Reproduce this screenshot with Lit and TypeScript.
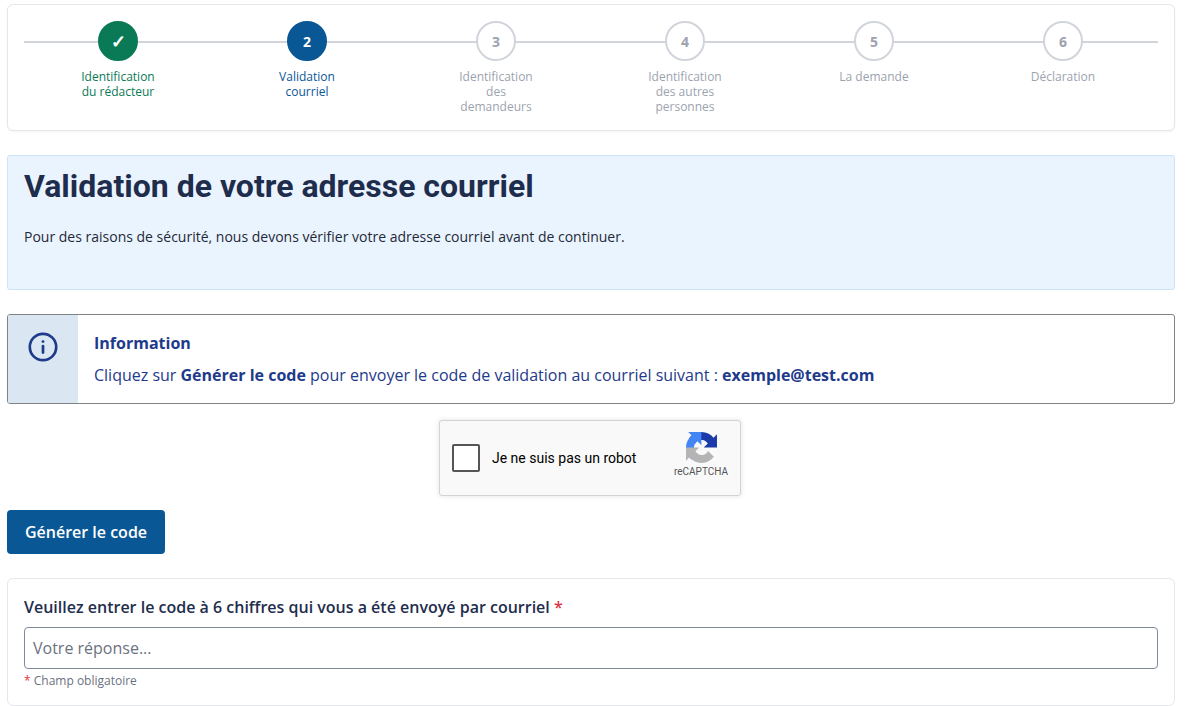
import { LitElement, html, css, svg } from "lit";
import { customElement } from "lit/decorators.js";

const steps = [
  { n: "✓", lines: ["Identification", "du rédacteur"], cls: "done" },
  { n: "2", lines: ["Validation", "courriel"], cls: "active" },
  { n: "3", lines: ["Identification", "des", "demandeurs"], cls: "" },
  { n: "4", lines: ["Identification", "des autres", "personnes"], cls: "" },
  { n: "5", lines: ["La demande"], cls: "" },
  { n: "6", lines: ["Déclaration"], cls: "" },
];

const recaptchaLogo = svg`<svg class="rc-logo" width="31" height="31" viewBox="0 0 64 64" aria-hidden="true">
  <path fill="#1c3aa9" d="M64 31.955l-.033-1.37V4.687l-7.16 7.16C50.948 4.674 42.033.093 32.05.093c-10.4 0-19.622 4.96-25.458 12.64l11.736 11.86a15.55 15.55 0 0 1 4.754-5.334c2.05-1.6 4.952-2.906 8.968-2.906.485 0 .86.057 1.135.163 4.976.393 9.288 3.14 11.828 7.124l-8.307 8.307c10.522-.04 22.4-.067 27.295.004"/>
  <path fill="#4285f4" d="M31.862.002l-1.37.033H4.594l7.16 7.16C4.58 13.054 0 21.97 0 31.953c0 10.4 4.96 19.622 12.64 25.458l11.86-11.736a15.55 15.55 0 0 1-5.334-4.754c-1.6-2.05-2.906-4.952-2.906-8.968 0-.485.057-.86.163-1.135.393-4.976 3.14-9.288 7.124-11.828l8.307 8.307c-.04-10.522-.067-22.4.004-27.295"/>
  <path fill="#b4b4b4" d="M.002 32l.033 1.37v25.898l7.16-7.16c5.86 7.173 14.775 11.754 24.76 11.754 10.4 0 19.622-4.96 25.458-12.64l-11.736-11.86a15.55 15.55 0 0 1-4.754 5.334c-2.05 1.6-4.952 2.906-8.968 2.906-.485 0-.86-.057-1.135-.163-4.976-.393-9.288-3.14-11.828-7.124l8.307-8.307c-10.522.04-22.4.067-27.295-.004"/>
</svg>`;

@customElement("app-root")
export class AppRoot extends LitElement {
  static styles = css`
    :host {
      display: block;
      box-sizing: border-box;
      height: 706px;
      overflow: hidden;
      padding: 4px 10px 0 7px;
      background: #fff;
      font-family: "Open Sans", sans-serif;
      color: #1f2d45;
    }
    * { box-sizing: border-box; }
    .card {
      background: #fff;
      border: 1px solid #e5e7eb;
      border-radius: 6px;
      box-shadow: 0 1px 2px rgba(0, 0, 0, 0.05);
    }
    .stepper {
      height: 127px;
      padding: 16px 16px 0;
    }
    .track {
      display: grid;
      grid-template-columns: repeat(6, 1fr);
      position: relative;
    }
    .track::before {
      content: "";
      position: absolute;
      left: 0;
      right: 0;
      top: 20px;
      height: 2px;
      background: #d1d5db;
    }
    .step {
      display: flex;
      flex-direction: column;
      align-items: center;
      position: relative;
      padding-right: 1px;
      color: #9ca3af;
    }
    .dot {
      width: 40px;
      height: 40px;
      border-radius: 50%;
      background: #fff;
      border: 2px solid #d1d5db;
      display: flex;
      align-items: center;
      justify-content: center;
      font-size: 14px;
      font-weight: 700;
      color: #9ca3af;
    }
    .label {
      margin-top: 8px;
      font-size: 12px;
      line-height: 15px;
      text-align: center;
    }
    .done { color: #0a7a56; }
    .done .dot { background: #0a7a56; border-color: #0a7a56; color: #fff; font-size: 18px; }
    .active { color: #0a5796; }
    .active .dot { background: #0a5796; border-color: #0a5796; color: #fff; }
    .hero {
      margin-top: 24px;
      height: 135px;
      padding: 11px 16px 0;
      background: #eaf4ff;
      border: 1px solid #cde3f8;
      border-radius: 3px;
    }
    h1 {
      margin: 0;
      font-family: Roboto, sans-serif;
      font-size: 32px;
      line-height: 38px;
      font-weight: 700;
      color: #1f2d4d;
    }
    .hero p {
      margin: 21px 0 0;
      font-size: 14px;
      line-height: 21px;
      color: #1f2937;
    }
    .alert {
      margin-top: 24px;
      height: 90px;
      display: flex;
      border: 1px solid #7f8286;
      border-radius: 3px;
      overflow: hidden;
      color: #1e3a8a;
    }
    .alert-icon {
      width: 70px;
      flex: none;
      background: #dae6f1;
      display: flex;
      justify-content: center;
      padding-top: 17px;
    }
    .alert-body {
      padding: 16px 16px 0;
    }
    .alert-title {
      font-size: 16px;
      line-height: 24px;
      font-weight: 700;
    }
    .alert-text {
      margin-top: 8px;
      font-size: 16px;
      line-height: 24px;
    }
    .alert-text b { font-weight: 700; }
    .captcha-row {
      margin-top: 16px;
      padding-right: 2px;
      display: flex;
      justify-content: center;
    }
    .captcha {
      width: 302px;
      height: 76px;
      background: #f9f9f9;
      border: 1px solid #d3d3d3;
      border-radius: 3px;
      box-shadow: 0 0 4px 1px rgba(0, 0, 0, 0.08);
      display: flex;
      align-items: center;
      padding-left: 12px;
      position: relative;
      font-family: Roboto, sans-serif;
    }
    .check {
      width: 28px;
      height: 28px;
      background: #fff;
      border: 2px solid #555;
      border-radius: 2px;
      flex: none;
    }
    .captcha span.txt {
      margin-left: 12px;
      font-size: 14px;
      color: #000;
    }
    .rc {
      position: absolute;
      right: 3px;
      top: 11px;
      width: 72px;
      display: flex;
      flex-direction: column;
      align-items: center;
    }
    .rc small {
      font-family: Roboto, sans-serif;
      font-size: 10px;
      line-height: 12px;
      margin-top: 3px;
      color: #555;
    }
    .btn {
      display: block;
      margin-top: 14px;
      width: 158px;
      height: 44px;
      background: #0a5796;
      color: #fff;
      border: 0;
      border-radius: 4px;
      font-family: "Open Sans", sans-serif;
      font-size: 16px;
      font-weight: 600;
    }
    .form {
      margin-top: 24px;
      height: 128px;
      padding: 16px 16px 0;
      box-shadow: none;
    }
    label {
      display: block;
      font-size: 16px;
      line-height: 24px;
      font-weight: 600;
      color: #1f2d4d;
    }
    .req { color: #dc3545; }
    .input {
      margin-top: 8px;
      height: 42px;
      border: 1px solid #7f8a9a;
      border-radius: 4px;
      padding: 0 8px;
      display: flex;
      align-items: center;
      font-size: 16px;
      color: #6b7280;
    }
    .help {
      margin-top: 3px;
      font-size: 12px;
      line-height: 18px;
      color: #6b7280;
    }
  `;

  render() {
    return html`
      <div class="card stepper">
        <div class="track">
          ${steps.map(
            (s) => html`<div class="step ${s.cls}">
              <div class="dot">${s.n}</div>
              <div class="label">${s.lines.map((l) => html`<div>${l}</div>`)}</div>
            </div>`
          )}
        </div>
      </div>

      <section class="hero">
        <h1>Validation de votre adresse courriel</h1>
        <p>Pour des raisons de sécurité, nous devons vérifier votre adresse courriel avant de continuer.</p>
      </section>

      <section class="alert">
        <div class="alert-icon">
          <svg width="30" height="30" viewBox="0 0 30 30" fill="none" stroke="#1e3a8a" stroke-width="2.7" aria-hidden="true">
            <circle cx="15" cy="15" r="13.2"/>
            <path d="M15 14.2v6.4" stroke-linecap="round"/>
            <circle cx="15" cy="9.6" r="1.4" fill="#1e3a8a" stroke="none"/>
          </svg>
        </div>
        <div class="alert-body">
          <div class="alert-title">Information</div>
          <div class="alert-text">Cliquez sur <b>Générer le code</b> pour envoyer le code de validation au courriel suivant : <b>exemple@test.com</b></div>
        </div>
      </section>

      <div class="captcha-row">
        <div class="captcha">
          <div class="check"></div>
          <span class="txt">Je ne suis pas un robot</span>
          <div class="rc">${recaptchaLogo}<small>reCAPTCHA</small></div>
        </div>
      </div>

      <button class="btn">Générer le code</button>

      <section class="card form">
        <label>Veuillez entrer le code à 6 chiffres qui vous a été envoyé par courriel <span class="req">*</span></label>
        <div class="input">Votre réponse...</div>
        <div class="help"><span class="req">*</span> Champ obligatoire</div>
      </section>
    `;
  }
}
